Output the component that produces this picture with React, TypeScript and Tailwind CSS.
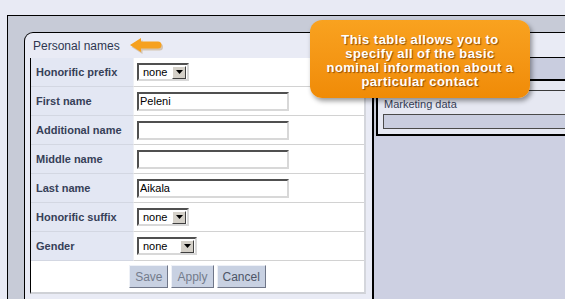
import React from 'react';

const rows: { label: string; kind: 'select' | 'text'; value: string; width?: string }[] = [
  { label: 'Honorific prefix', kind: 'select', value: 'none', width: 'w-[52px]' },
  { label: 'First name', kind: 'text', value: 'Peleni' },
  { label: 'Additional name', kind: 'text', value: '' },
  { label: 'Middle name', kind: 'text', value: '' },
  { label: 'Last name', kind: 'text', value: 'Aikala' },
  { label: 'Honorific suffix', kind: 'select', value: 'none', width: 'w-[52px]' },
  { label: 'Gender', kind: 'select', value: 'none', width: 'w-[60px]' },
];

// inset border like the old windows controls
const inset =
  'border-2 border-t-[#505050] border-l-[#505050] border-b-[#d8d8d8] border-r-[#d8d8d8] bg-white';

const Select = ({ value, width }: { value: string; width?: string }) => (
  <div className={`${inset} ${width} h-[18px] flex items-center justify-between pl-[4px] pr-[1px]`}>
    <span className="text-[11px] text-black leading-none">{value}</span>
    <span className="w-[14px] h-[13px] bg-[#d4d0c8] border border-t-white border-l-white border-b-[#404040] border-r-[#404040] flex items-center justify-center">
      <svg width="7" height="4" viewBox="0 0 7 4">
        <path d="M0 0h7L3.5 4z" fill="#000" />
      </svg>
    </span>
  </div>
);

const TextBox = ({ value }: { value: string }) => (
  <input
    readOnly
    value={value}
    className={`${inset} w-[152px] h-[19px] px-[1px] text-[11px] text-black outline-none`}
  />
);

const Btn = ({ children, dark }: { children: React.ReactNode; dark?: boolean }) => (
  <button
    className={`h-[23px] px-[5px] text-[12px] bg-[#c8d1e2] border border-t-[#eef1f7] border-l-[#eef1f7] border-b-[#6f7688] border-r-[#6f7688] ${
      dark ? 'text-[#4d5566]' : 'text-[#747c8c]'
    }`}
  >
    {children}
  </button>
);

// orange pointer next to the section title
const Arrow = () => (
  <svg width="36" height="18" viewBox="0 0 36 18" className="ml-[9px] mt-[2px]">
    <path d="M1 7 L12 0 L12 3.5 L29 3.5 Q32.5 3.5 32.5 7 Q32.5 10.5 29 10.5 L12 10.5 L12 14 Z" fill="#a86a10" opacity="0.3" transform="translate(1.5 2)" />
    <path d="M1 7 L12 0 L12 3.5 L29 3.5 Q32.5 3.5 32.5 7 Q32.5 10.5 29 10.5 L12 10.5 L12 14 Z" fill="#f6a11f" />
  </svg>
);

export default function App() {
  return (
    <div
      className="relative w-[565px] h-[299px] overflow-hidden bg-[#e8eaf4] pt-[15px] pl-[7px]"
      style={{ fontFamily: '"Liberation Sans", Arial, sans-serif' }}
    >
      <div className="h-[300px] border-l border-t border-black bg-[#c7cbd7] pl-[16px] pt-[16px] flex">
        {/* personal names panel */}
        <div className="w-[350px] shrink-0 rounded-tl-[9px] border-l border-t border-r-2 border-black bg-[#e9ebf5]">
          <div className="h-[25px] flex items-center pl-[8px]">
            <span className="text-[12px] text-[#2e3650]">Personal names</span>
            <Arrow />
          </div>
          <div className="ml-[5px] w-[336px] border-l border-black border-r-2 border-r-[#d4d6dc] border-b-2 border-b-[#cfd1d6] bg-white">
            {rows.map((r) => (
              <div key={r.label} className="flex h-[29px]">
                <div className="w-[102px] shrink-0 bg-[#e3e7f3] border-b border-[#d3d7e2] flex items-center pl-[5px]">
                  <span className="text-[11px] font-bold text-[#364058]">{r.label}</span>
                </div>
                <div className="flex-1 border-l border-[#eef0f5] border-b border-b-[#d2d2d2] flex items-center pl-[3px]">
                  {r.kind === 'select' ? <Select value={r.value} width={r.width} /> : <TextBox value={r.value} />}
                </div>
              </div>
            ))}
            <div className="h-[31px] flex items-center justify-center gap-[3px]">
              <Btn>Save</Btn>
              <Btn>Apply</Btn>
              <Btn dark>Cancel</Btn>
            </div>
          </div>
        </div>

        {/* right side panel */}
        <div className="flex-1 flex flex-col">
          <div className="h-[25px] border-t border-black bg-[#e9ebf5]" />
          <div className="h-[22px] border-t border-black bg-[#c9cddf]" />
          <div className="ml-[2px] border-t-2 border-l-2 border-b-2 border-black bg-[#e6e8f2] pb-[5px]">
            <div className="h-[10px] border-b border-[#3a3a3a]" />
            <div className="pl-[6px] pt-[6px] text-[11px] text-[#364058] leading-[14px]">Marketing data</div>
            <div className="mt-[3px] ml-[5px] h-[15px] border border-[#4a4a4a] border-r-0 bg-[#c9cddf]" />
          </div>
          <div className="flex-1 bg-[#cdd0e2]" />
        </div>
      </div>

      {/* help callout */}
      <div className="absolute left-[310px] top-[20px] w-[220px] h-[78px] pt-[3px] rounded-[12px] bg-gradient-to-b from-[#f9a21f] to-[#f08b06] shadow-[2px_3px_5px_rgba(0,0,0,0.4)] flex flex-col items-center justify-center text-white font-bold text-[13px] tracking-[0.45px] leading-[14px] [text-shadow:1px_1px_1px_rgba(110,55,0,0.75)]">
        <span>This table allows you to</span>
        <span>specify all of the basic</span>
        <span>nominal information about a</span>
        <span>particular contact</span>
      </div>
    </div>
  );
}
